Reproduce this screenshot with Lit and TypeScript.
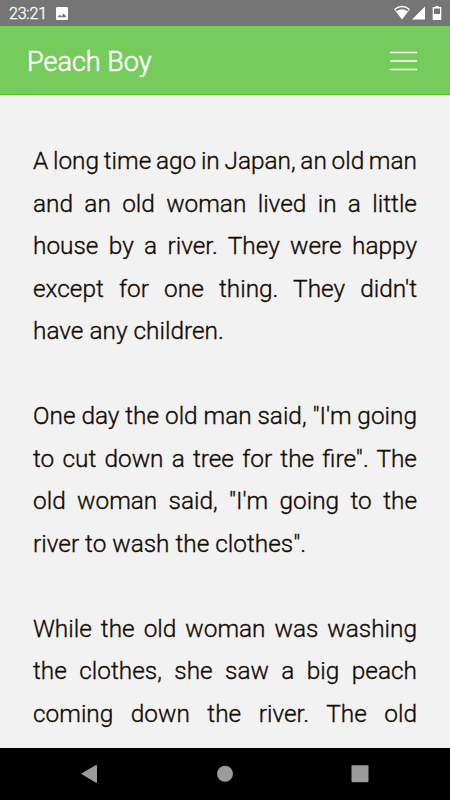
import { LitElement, html, css } from "lit";
import { customElement } from "lit/decorators.js";
import { classMap } from "lit/directives/class-map.js";

const story: string[][] = [
  ["A long time ago in Japan, an old man", "and an old woman lived in a little", "house by a river. They were happy", "except for one thing. They didn't", "have any children."],
  ["One day the old man said, \"I'm going", "to cut down a tree for the fire\". The", "old woman said, \"I'm going to the", "river to wash the clothes\"."],
  ["While the old woman was washing", "the clothes, she saw a big peach", "coming down the river. The old", ""],
];

@customElement("app-root")
export class AppRoot extends LitElement {
  static styles = css`
    :host { display: flex; flex-direction: column; width: 450px; height: 800px; overflow: hidden; background: #f2f2f2; font-family: Roboto, sans-serif; }
    .status { height: 26px; flex: none; box-sizing: border-box; background: #757575; color: #fff; display: flex; align-items: center; padding: 1px 6px 0 9px; font-size: 16px; font-weight: 300; letter-spacing: -0.2px; -webkit-text-stroke: 0.35px #fff; }
    .picture { width: 12px; height: 13px; margin: -1px 0 0 9px; }
    .system { width: 50px; height: 26px; margin: -1px 0 0 auto; }
    header { height: 69px; flex: none; box-sizing: border-box; background: #75cc5c; border-bottom: 1px solid #58c122; color: #fff; display: flex; align-items: center; justify-content: space-between; padding: 2px 33px 0 27px; }
    h1 { margin: 2px 0 0; font-size: 27px; line-height: 32px; font-weight: 300; -webkit-text-stroke: 0.5px #fff; }
    .menu { width: 27px; height: 20px; }
    main { flex: 1; min-height: 0; overflow: hidden; padding: 45px 33px 0; color: #130a04; font-size: 24.4px; font-weight: 300; line-height: 42.5px; -webkit-text-stroke: 0.35px #130a04; }
    p { margin: 0 0 42.5px; }
    .line { display: block; height: 42.5px; text-align: justify; text-align-last: justify; white-space: nowrap; word-spacing: -0.5px; }
    .line:last-child { text-align-last: left; word-spacing: 0; }
    .line.tight { word-spacing: -2.5px; }
    nav { height: 52px; flex: none; background: #000; }
    svg { display: block; }
  `;

  render() {
    return html`
      <div class="status"><span>23:21</span>
        <svg class="picture" viewBox="0 0 12 13"><path fill="#fff" fill-rule="evenodd" d="M1.3 0h9.4Q12 0 12 1.3v10.4Q12 13 10.7 13H1.3Q0 13 0 11.7V1.3Q0 0 1.3 0ZM1.5 10.3h9L7.7 6.5 5.3 9.4 3.8 7.6Z"/></svg>
        <svg class="system" viewBox="394 0 50 26">
          <path fill="#fff" d="M394 9Q402 2.5 410 9L402 19.4Z"/>
          <path fill="none" stroke="#757575" stroke-width="2" d="M396 10.3Q402 6 408 10.3"/>
          <path fill="#fff" d="M425 6.5v13h-13Z"/>
          <path fill="#fff" fill-rule="evenodd" d="M435.5 6h3v1h2.8v13h-8.6V7h2.8ZM434 8.5V14h6V8.5Z"/>
        </svg>
      </div>
      <header><h1>Peach Boy</h1>
        <svg class="menu" viewBox="0 0 27 20"><path stroke="#fff" stroke-width="1.6" d="M0 1.5h27M0 10h27M0 18.5h27"/></svg>
      </header>
      <main>${story.map((p, i) => html`<p>${p.map((l, j) => html`<span class=${classMap({ line: true, tight: i === 0 && j === 0 })}>${l}</span>`)}</p>`)}</main>
      <nav><svg width="450" height="52"><path fill="#9b9b9b" d="M81 25.8L96 17Q97 16.7 97 17.8v16.4Q97 35 96 34.7Z"/><circle cx="225" cy="25.8" r="8" fill="#9b9b9b"/><rect x="351.5" y="17.3" width="17" height="17" rx="1" fill="#9b9b9b"/></svg></nav>
    `;
  }
}
